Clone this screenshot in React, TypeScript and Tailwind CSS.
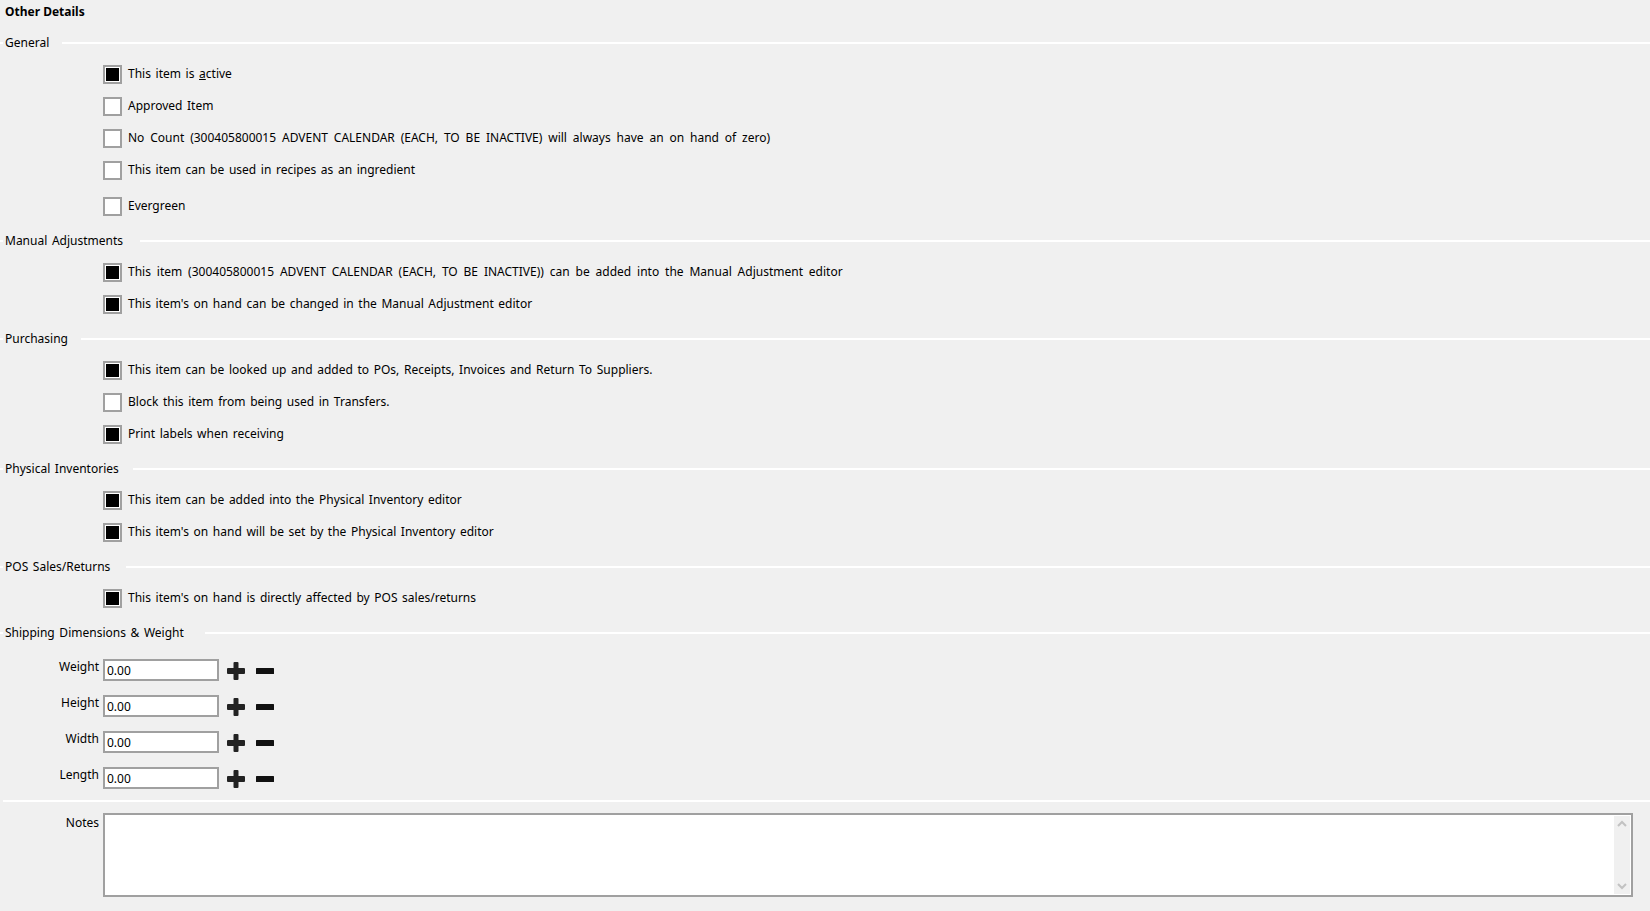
import type { ReactNode } from "react";

type Row = { label: ReactNode; checked: boolean; extraTop?: boolean; wide?: boolean };

type Section = { title: string; labelWidth: string; rows: Row[] };

const sections: Section[] = [
  {
    title: "General",
    labelWidth: "w-[59px]",
    rows: [
      {
        label: (
          <>
            This item is <u>a</u>ctive
          </>
        ),
        checked: true,
      },
      { label: "Approved Item", checked: false },
      {
        label: "No Count (300405800015 ADVENT CALENDAR (EACH, TO BE INACTIVE) will always have an on hand of zero)",
        checked: false,
        wide: true,
      },
      { label: "This item can be used in recipes as an ingredient", checked: false },
      { label: "Evergreen", checked: false, extraTop: true },
    ],
  },
  {
    title: "Manual Adjustments",
    labelWidth: "w-[137px]",
    rows: [
      {
        label: "This item (300405800015 ADVENT CALENDAR (EACH, TO BE INACTIVE)) can be added into the Manual Adjustment editor",
        checked: true,
        wide: true,
      },
      { label: "This item's on hand can be changed in the Manual Adjustment editor", checked: true },
    ],
  },
  {
    title: "Purchasing",
    labelWidth: "w-[78px]",
    rows: [
      {
        label: "This item can be looked up and added to POs, Receipts, Invoices and Return To Suppliers.",
        checked: true,
      },
      { label: "Block this item from being used in Transfers.", checked: false },
      { label: "Print labels when receiving", checked: true },
    ],
  },
  {
    title: "Physical Inventories",
    labelWidth: "w-[130px]",
    rows: [
      { label: "This item can be added into the Physical Inventory editor", checked: true },
      { label: "This item's on hand will be set by the Physical Inventory editor", checked: true },
    ],
  },
  {
    title: "POS Sales/Returns",
    labelWidth: "w-[123px]",
    rows: [{ label: "This item's on hand is directly affected by POS sales/returns", checked: true }],
  },
];

const dimensions = ["Weight", "Height", "Width", "Length"];

function GroupHeader({ title, labelWidth }: { title: string; labelWidth: string }) {
  return (
    <div className="flex h-[34px] items-center pt-[4px]">
      <div className="h-[2px] w-[3px] bg-white" />
      <div className={`${labelWidth} shrink-0 pl-[2px] leading-[16px]`}>{title}</div>
      <div className="h-[2px] flex-1 bg-white" />
    </div>
  );
}

function CheckBox({ checked }: { checked: boolean }) {
  return (
    <span className="block size-[19px] shrink-0 border-2 border-[#a0a0a0] bg-white p-[1px]">
      {checked && <span className="block size-full bg-black" />}
    </span>
  );
}

function PlusIcon() {
  return (
    <svg width="18" height="18" viewBox="0 0 18 18" aria-hidden="true">
      <rect x="6.5" y="0" width="5" height="18" rx="1" fill="#222" />
      <rect x="0" y="6" width="18" height="6" rx="1" fill="#222" />
    </svg>
  );
}

function MinusIcon() {
  return (
    <svg width="18" height="18" viewBox="0 0 18 18" aria-hidden="true">
      <rect x="0" y="6" width="18" height="6" rx="0.5" fill="#111" />
    </svg>
  );
}

export default function App() {
  return (
    <div
      className="h-[911px] w-[1650px] overflow-hidden bg-[#f0f0f0] text-[12px] text-black [word-spacing:1.5px]"
      style={{ fontFamily: '"Noto Sans", "Segoe UI", sans-serif' }}
    >
      <div className="flex h-[24px] items-center pl-[5px] font-bold [word-spacing:0px]">Other Details</div>

      {sections.map((section) => (
        <div key={section.title}>
          <GroupHeader title={section.title} labelWidth={section.labelWidth} />
          {section.rows.map((row, i) => (
            <div key={i} className={row.extraTop ? "pt-[4px]" : ""}>
              <label className="flex h-[32px] items-center gap-[6px] pl-[103px]">
                <CheckBox checked={row.checked} />
                <span
                  className={`whitespace-nowrap leading-[16px] ${row.wide ? "[word-spacing:2.75px]" : ""}`}
                >
                  {row.label}
                </span>
              </label>
            </div>
          ))}
        </div>
      ))}

      <GroupHeader title="Shipping Dimensions & Weight" labelWidth="w-[202px]" />
      <div className="pt-[4px]">
        {dimensions.map((name) => (
          <div key={name} className="flex h-[36px] items-start gap-[4px] pt-[7px]">
            <div className="w-[99px] text-right leading-[16px]">{name}</div>
            <input
              readOnly
              value="0.00"
              className="h-[22px] w-[116px] border-2 border-[#a0a0a0] bg-white px-[2px] pt-[1px] text-[12px] leading-[16px] outline-none"
            />
            <div className="ml-[4px] mt-[1px] flex h-[22px] items-center gap-[11px]">
              <PlusIcon />
              <MinusIcon />
            </div>
          </div>
        ))}
      </div>

      <div className="ml-[3px] mt-[4px] h-[2px] bg-white" />

      <div className="mt-[11px] flex items-start gap-[4px] pr-[17px]">
        <div className="w-[99px] pt-[2px] text-right leading-[16px]">Notes</div>
        <div className="flex h-[84px] flex-1 border-2 border-[#a0a0a0] bg-white p-[1px]">
          <textarea className="flex-1 resize-none bg-white px-[2px] text-[12px] outline-none" />
          <div className="flex w-[16px] flex-col items-center justify-between bg-[#f0f0f0] py-[4px]">
            <svg width="10" height="7" viewBox="0 0 10 7" aria-hidden="true">
              <path d="M1 6 L5 2 L9 6" fill="none" stroke="#c2c2c2" strokeWidth="2" />
            </svg>
            <svg width="10" height="7" viewBox="0 0 10 7" aria-hidden="true">
              <path d="M1 1 L5 5 L9 1" fill="none" stroke="#c2c2c2" strokeWidth="2" />
            </svg>
          </div>
        </div>
      </div>
    </div>
  );
}
